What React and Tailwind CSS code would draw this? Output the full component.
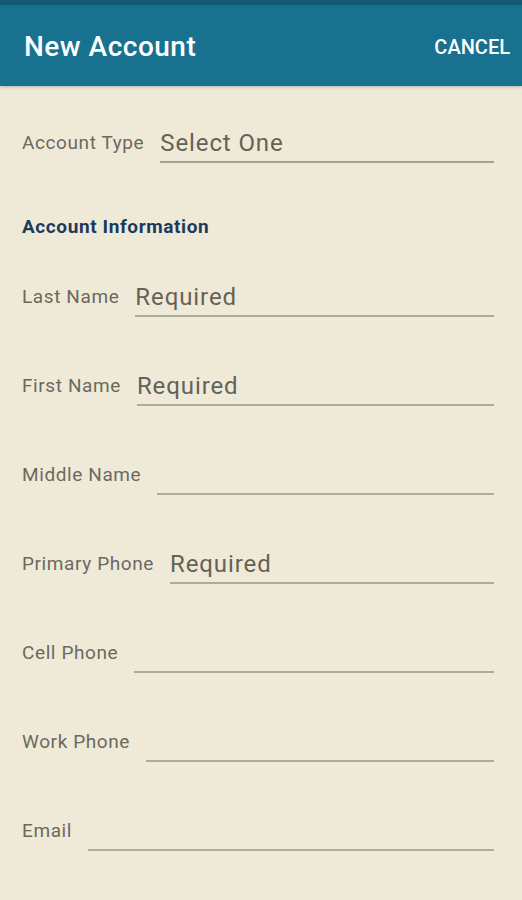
const fields = [
  { label: 'Last Name', value: 'Required' },
  { label: 'First Name', value: 'Required' },
  { label: 'Middle Name', value: '' },
  { label: 'Primary Phone', value: 'Required' },
  { label: 'Cell Phone', value: '' },
  { label: 'Work Phone', value: '' },
  { label: 'Email', value: '' },
];

function Row({ label, value }) {
  return (
    <div className="flex items-center">
      <span className="shrink-0 mr-[16px] text-[19px] tracking-[0.6px] text-[#6b695f]">{label}</span>
      <div className="flex-1 h-[40px] flex items-center pt-[2px] border-b-2 border-[#aeab9b] text-[24px] tracking-[0.9px] text-[#646257]">
        {value}
      </div>
    </div>
  );
}

export default function App() {
  return (
    <div className="w-[522px] h-[900px] bg-[#efe9d8] overflow-hidden" style={{ fontFamily: 'Roboto, "Liberation Sans", sans-serif' }}>
      <div className="h-[5px] bg-[#145a72]" />
      <header className="h-[81px] bg-[#17718f] flex items-center justify-between pl-[24px] pr-[12px] pt-[3px] shadow-[0_1px_3px_rgba(0,0,0,0.25)]">
        <h1 className="text-[28px] tracking-[0.5px] font-medium text-white">New Account</h1>
        <button className="text-[20px] font-medium text-white">CANCEL</button>
      </header>

      <div className="pl-[22px] pr-[28px] pt-[37px]">
        <div className="flex items-center">
          <span className="shrink-0 mr-[16px] text-[19px] tracking-[0.6px] text-[#6b695f]">Account Type</span>
          <div className="flex-1 h-[40px] flex items-center pt-[2px] border-b-2 border-[#a6a291] text-[24px] tracking-[0.9px] text-[#646257]">
            Select One
          </div>
        </div>

        <h2 className="mt-[54px] mb-[40px] h-[20px] leading-[20px] text-[19px] tracking-[0.6px] font-bold text-[#1c3a5b]">Account Information</h2>

        <div className="flex flex-col gap-[49px]">
          {fields.map(f => <Row key={f.label} {...f} />)}
        </div>
      </div>
    </div>
  );
}
